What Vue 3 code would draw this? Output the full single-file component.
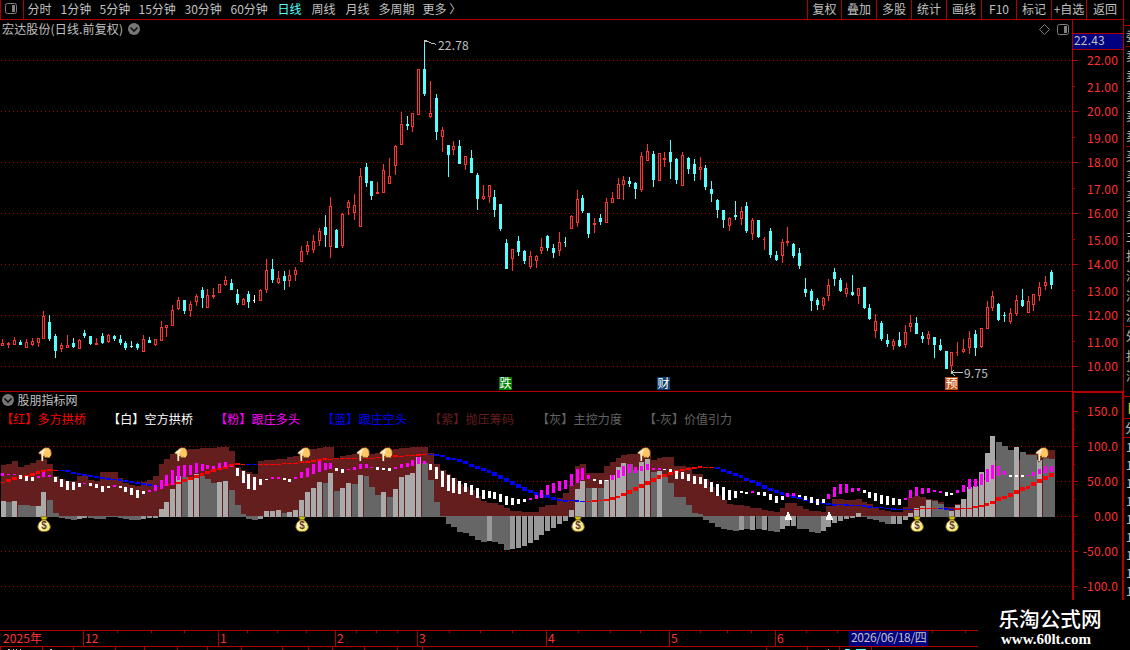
<template>
  <div class="app">
    <div class="left">
      <header class="toolbar">
        <span class="panel-btn">
          <svg width="13" height="12"><rect x="0.5" y="0.5" width="11" height="10" rx="2" class="ico" /><rect x="7" y="2" width="3" height="7" fill="#808080" /></svg>
        </span>
        <nav class="periods">
          <span v-for="p in periods" :key="p[0]" :class="{ active: p[0] === '日线' }" :style="{ width: p[1] + 'px' }">{{ p[0] }}</span>
        </nav>
        <nav class="tools">
          <span v-for="t in tools" :key="t">{{ t }}</span>
        </nav>
      </header>

      <svg class="price" width="1123" height="371" viewBox="0 20 1123 371" shape-rendering="crispEdges">
        <line v-for="y in priceGrid" :key="y" x1="1" x2="1072" :y1="y + 0.5" :y2="y + 0.5" class="grid" />
        <g v-for="c in candleList" :key="c.x" :fill="c.color">
          <rect :x="c.x" :y="c.high" width="1" :height="c.low - c.high" />
          <rect :x="c.x - 1" :y="c.top" :width="c.thin ? 2 : 3" :height="c.bottom - c.top" />
          <rect v-if="c.hollow" :x="c.x" :y="c.top + 1" width="1" :height="c.bottom - c.top - 2" fill="#000" />
        </g>
        <path d="M424.5 44V40.500H427M425 41.500H428L431 43H433L436 44.500" class="arrow" />
        <text x="438" y="50" class="mark">22.78</text>
        <path d="M963 372.500H951M951 372.500L954 370M951 372.500L955 376" class="arrow" />
        <text x="964" y="378" class="mark">9.75</text>
        <g v-for="e in events" :key="e.t">
          <rect :x="e.x" y="377" width="13" height="13" :fill="e.bg" />
          <text :x="e.x + 0.5" y="388" class="event">{{ e.t }}</text>
        </g>
        <text x="2" y="34" class="title" textLength="121">宏达股份(日线.前复权)</text>
        <g shape-rendering="auto">
          <circle cx="134" cy="29" r="6" fill="#777" />
          <path d="M130.500 27.500L134 31L137.500 27.500" class="chev" />
          <path d="M1039.500 29.500L1044.500 24.500L1049.500 29.500L1044.500 34.500Z" class="ico" />
          <rect x="1057.500" y="24.500" width="11" height="10" rx="2" class="ico" />
          <rect x="1064" y="26" width="3" height="7" fill="#808080" />
        </g>
        <path d="M1072.500 20V391M1073 33.500H1123M1073 49.500H1123" class="frame" />
        <rect x="1073" y="34" width="50" height="15" fill="#000080" />
        <text x="1074" y="45" class="mark">22.43</text>
        <g v-for="(l, i) in priceLabels" :key="l[0]">
          <rect x="1073" :y="i % 2 ? l[1] - 1 : l[1]" :width="i % 2 ? 2 : 5" height="1" fill="#b00000" />
          <text x="1118" :y="l[1] + 5" class="axis">{{ l[0] }}</text>
        </g>
      </svg>

      <svg class="sub" width="1123" height="239" viewBox="0 391 1123 239" shape-rendering="crispEdges">
        <path d="M0 391.500H1123" class="frame" />
        <line v-for="y in subGrid" :key="y" x1="1" x2="1072" :y1="y + 0.5" :y2="y + 0.5" class="grid" />
        <rect v-for="b in bars" :key="'b' + b.x" :x="b.left" :y="b.brown" :width="b.w" :height="517 - b.brown" fill="#641e1e" />
        <rect v-for="b in bars" :key="'g' + b.x" :x="b.left" :y="b.gy" :width="b.light ? Math.min(5, b.w) : b.w" :height="b.gh" :fill="b.fill" />
        <rect v-for="b in bars" :key="'l' + b.x" :x="b.left" :y="b.ly" :width="b.w - 1" :height="b.lh" :fill="b.lineColor" />
        <rect v-for="b in bars" :key="'s' + b.x" :x="b.x - 1" :y="b.st" width="3" :height="b.sh" :fill="b.stick" />

        <path v-for="x in [788, 829]" :key="'t' + x" :d="`M${x - 0.5} 512H${x + 0.5}L${x + 4.5} 520H${x - 3.5}Z`" fill="#fff" />
        <g shape-rendering="auto">
          <g v-for="x in hands" :key="'h' + x" :transform="`translate(${x - 6} 446)`">
            <path d="M1.500 7L6.500 2.300Q9 .8 12 1.800Q15 4 14.500 9L12.500 12L8 11.800L6.800 10L6.500 14.500L4.500 15.800L4 8.500L2 8Z" fill="#ffc864" stroke="#4c2410" stroke-width=".8" />
            <path d="M2.500 6.800L7 4L5.300 8.500V15" fill="none" stroke="#fff0d8" stroke-width="1.500" />
            <path d="M7.500 9.500V11.500M10 10.500V12" stroke="#a05a20" stroke-width=".8" />
          </g>
          <g v-for="x in bags" :key="'m' + x" :transform="`translate(${x - 6} 516)`">
            <path d="M3.500 .8H10.500L9 4H5Z" fill="#d8c800" stroke="#4a3800" stroke-width=".5" />
            <path d="M5 4Q0.500 7 .7 11Q1.500 15.700 7 15.700Q12.800 15.700 13.500 11Q13.200 7 9 4Z" fill="#f6ec70" stroke="#6a4a20" stroke-width=".8" />
            <ellipse cx="6" cy="9.500" rx="4" ry="4.300" fill="#fffbe0" />
            <text x="7" y="13.300" class="dollar">$</text>
          </g>
          <circle cx="8" cy="400" r="6" fill="#777" />
          <path d="M4.500 398.500L8 402L11.500 398.500" class="chev" />
        </g>

        <text x="17.500" y="405" class="title" textLength="60">股朋指标网</text>
        <text v-for="l in legend" :key="l.x" :x="l.x" y="424" :fill="l.color" :textLength="l.w">{{ l.t }}</text>

        <path d="M1073 393V600M1123 393V600" class="frame thick" />
        <path d="M1072 392.500H1123" class="frame" />
        <g v-for="l in subLabels" :key="l[0]">
          <rect x="1074" :y="l[1]" width="4" height="1" fill="#b00000" />
          <rect x="1074" :y="l[1] + 18" width="1" height="1" fill="#b00000" />
          <text x="1118" :y="l[1] + 5" class="axis">{{ l[0] }}</text>
        </g>
      </svg>

      <svg class="time" width="1123" height="20" viewBox="0 630 1123 20" shape-rendering="crispEdges">
        <path d="M0 630.500H978M0 646.500H978" class="frame" />
        <text x="3" y="643" class="date" textLength="39">2025年</text>
        <g v-for="m in months" :key="m[1]">
          <rect :x="m[1]" y="631" width="1" height="15" fill="#b00000" />
          <text :x="m[1] + 2" y="643" class="date">{{ m[0] }}</text>
        </g>
        <rect v-for="x in ticks" :key="x" :x="x" y="631" width="1" height="2" fill="#b00000" />
        <rect v-for="x in lowTicks" :key="'u' + x" :x="x" y="647" width="1" height="3" fill="#b00000" />
        <path d="M8 649.500H10M13 649.500H14M16 649.500H17M20 649.500H21M50 649.500H52M828 649.500H829" class="arrow" />
        <path d="M845 649.500H850M856 649.500H866" stroke="#54ffff" />
        <rect x="849" y="631" width="79" height="15" fill="#000080" />
        <text x="851" y="642" class="mark" textLength="76">2026/06/18/四</text>
      </svg>
    </div>

    <aside class="strip">
      <div class="quotes">
        <span v-for="(s, i) in strip" :key="i">{{ s }}</span>
      </div>
      <div class="tab">目</div>
      <div class="row">分</div>
      <div class="deals">
        <span v-for="n in 9" :key="n">1</span>
      </div>
    </aside>

    <div class="brand">
      <b>乐淘公式网</b>
      <i>www.60lt.com</i>
    </div>
  </div>
</template>

<script setup>
const periods = [['分时', 33], ['1分钟', 39], ['5分钟', 39], ['15分钟', 46], ['30分钟', 46], ['60分钟', 47], ['日线', 34], ['周线', 34], ['月线', 33], ['多周期', 44], ['更多 〉', 40]]
const tools = ['复权', '叠加', '多股', '统计', '画线', 'F10', '标记', '+自选', '返回']

const priceGrid = [60, 111, 162, 213, 264, 315, 366]
const subGrid = [446, 481, 516, 551, 586]
const priceLabels = [['22.00', 60], ['21.00', 87], ['20.00', 111], ['19.00', 138], ['18.00', 162], ['17.00', 189], ['16.00', 213], ['15.00', 240], ['14.00', 264], ['13.00', 291], ['12.00', 315], ['11.00', 342], ['10.00', 366]]
const subLabels = [['150.0', 411], ['100.0', 446], ['50.00', 481], ['0.00', 516], ['-50.00', 551], ['-100.0', 586]]
const events = [{ t: '跌', x: 499, bg: '#008000' }, { t: '财', x: 657, bg: '#104070' }, { t: '预', x: 945, bg: '#c05010' }]
const legend = [
  { t: '【红】多方拱桥', x: 1, w: 85, color: '#f00' },
  { t: '【白】空方拱桥', x: 108, w: 85, color: '#fff' },
  { t: '【粉】跟庄多头', x: 215, w: 85, color: '#f0f' },
  { t: '【蓝】跟庄空头', x: 322, w: 85, color: '#00f' },
  { t: '【紫】抛压筹码', x: 429, w: 85, color: '#641e1e' },
  { t: '【灰】主控力度', x: 537, w: 85, color: '#646464' },
  { t: '【-灰】价值引力', x: 644, w: 88, color: '#646464' }
]
const hands = [43, 179, 302, 361, 384, 642, 1040]
const bags = [43, 301, 577, 916, 951]
const months = [['12', 83], ['1', 218], ['2', 335], ['3', 417], ['4', 546], ['5', 669], ['6', 775]]
const ticks = [117, 151, 184, 247, 277, 306, 356, 376, 397, 449, 480, 512, 578, 610, 640, 700, 727, 751, 806, 837, 932, 965]
const lowTicks = [0, 42, 73, 115, 144, 177, 207, 241, 282, 308, 332, 364, 397, 422, 766, 807, 839, 871]
const strip = '委卖卖卖卖卖买买买买主扣消消沪外扣消'.split('')

// r/c/w, high, body top, body bottom, low
const candles = `r339,343,346,346 r342,343,345,348 r337,340,345,345 c340,342,345,345 r339,342,348,348 r338,341,345,346 r338,338,343,347 r311,316,339,339 c315,322,339,341 c334,336,351,358
r343,345,349,352 r335,345,348,348 c338,343,347,348 r339,340,349,349 c330,333,336,338 c336,336,344,345 r338,343,345,345 c333,336,343,344 r334,335,342,343 c335,336,339,341
c335,339,343,345 c341,343,348,350 c341,346,347,348 c343,344,348,350 r335,339,352,352 c337,340,343,343 r339,339,345,346 r321,327,341,341 r325,325,328,337 r305,310,326,326
r297,300,309,310 c300,300,311,314 r301,304,311,317 r294,296,302,306 c287,290,298,308 r289,295,308,308 r288,295,297,299 r284,284,293,293 r276,280,285,286 c279,283,290,290
c289,294,303,305 r298,299,305,305 c291,294,302,308 w295,300,301,303 r289,290,301,301 r259,270,290,293 c259,269,280,283 r271,278,283,284 c271,276,281,290 r270,275,281,287
r267,270,275,281 r246,251,262,262 r241,245,252,255 r235,241,250,253 r228,231,241,246 c215,227,235,247 r197,206,247,258 c229,230,248,248 r213,214,246,248 r200,202,208,215
r194,205,213,220 r168,176,227,227 c163,167,183,187 c181,181,196,200 r182,192,194,194 r164,170,193,193 r158,176,184,184 r145,146,166,175 r112,124,145,145 c116,124,126,130
r113,113,127,132 r69,69,115,115 c40,69,94,96 r81,113,117,118 c94,98,132,140 r127,130,137,152 c145,145,155,177 r141,146,150,155 c140,146,164,164 r156,156,165,170
c150,158,173,173 c173,175,199,210 r185,196,199,200 r185,185,197,203 c190,197,210,217 c204,204,229,231 c239,243,269,269 r249,249,259,271 c236,241,252,256 c250,251,261,264
r251,256,267,269 r255,256,261,268 r238,247,251,254 c235,236,248,251 c244,248,253,258 r232,242,251,256 c237,242,243,247 r215,216,229,229 r190,199,223,227 c195,198,211,213
c213,213,234,238 r218,223,225,233 c214,218,222,225 r198,202,223,223 r192,198,203,203 r178,184,199,199 r176,180,185,200 c177,181,184,187 c182,183,189,199 r152,156,190,192
r144,151,161,161 c151,154,180,187 r153,153,181,181 r152,158,160,167 c140,152,162,179 c158,159,180,184 r152,155,186,186 c157,158,169,174 c159,164,174,181 r157,167,170,180
c165,168,187,190 c181,189,194,202 c199,200,210,218 c210,210,220,228 r217,218,226,231 c201,215,217,220 r207,211,219,225 c202,206,231,233 r218,220,234,240 c220,220,237,238
r237,239,240,250 c228,231,255,258 c251,255,260,261 r239,242,256,263 r227,241,243,246 c243,244,256,258 c248,253,266,269 c278,289,293,297 c289,291,301,311 c298,300,305,310
r297,298,306,310 r279,285,296,301 c268,272,279,286 c278,280,291,292 r283,288,294,297 c275,292,295,296 r288,288,296,304 c287,287,308,309 c304,308,319,320 r314,321,331,338
c321,323,339,341 c334,340,344,347 r339,341,346,350 c332,340,346,347 r325,332,345,348 r315,323,327,332 c317,323,334,334 c332,336,339,343 r331,334,339,345 c337,337,345,358
c339,345,350,351 c351,351,369,369 r352,352,366,373 r342,352,353,356 r339,349,352,353 r331,338,348,354 c330,334,348,356 r328,328,347,348 r301,307,329,329 r291,296,308,311
c303,304,320,321 c312,315,316,322 r308,313,322,324 r295,300,314,316 c289,300,306,307 r296,301,313,313 r294,294,305,311 r282,287,296,301 r276,282,286,290 c270,272,285,289`.split(/\s+/)

// top edge of the brown area
const brown = [
  465, 464, 461, 467, 465, 463, 460, 459, 464, 476, 479, 481, 481, 476, 476, 480, 481, 472, 472, 472,
  478, 483, 485, 486, 482, 480, 476, 464, 459, 454, 451, 450, 449, 449, 448, 448, 448, 447, 447, 451,
  467, 470, 472, 474, 461, 460, 460, 459, 459, 457, 456, 453, 449, 449, 448, 447, 447, 459, 456, 455,
  454, 452, 452, 454, 453, 450, 450, 449, 448, 448, 447, 447, 447, 453, 464, 470, 474, 478, 484, 487,
  490, 496, 501, 503, 503, 505, 508, 511, 511, 512, 512, 512, 507, 505, 505, 498, 493, 485, 466, 464,
  473, 473, 473, 466, 462, 458, 455, 454, 454, 454, 451, 460, 458, 457, 457, 466, 466, 467, 474, 474,
  479, 487, 495, 500, 504, 505, 505, 506, 508, 508, 510, 511, 512, 508, 503, 503, 506, 509, 511, 511,
  512, 506, 499, 499, 500, 500, 499, 502, 504, 508, 510, 511, 512, 512, 507, 497, 496, 497, 499, 500,
  502, 507, 507, 504, 499, 488, 487, 480, 463, 460, 460, 460, 460, 460, 460, 454, 454, 450, 450, 450
]

// far edge of the gray bars, L is a light one
const gray = `501L 502 501L 505 505 506 506L 492L 500 513 518 519 520 519L 518L 518 519 519 517 517
518 519 520 520 519L 518L 518L 509L 502L 489L 476L 477 479L 474L 476 479 483 482L 481L 490
505 514 519 520 519L 511L 511L 510L 513 512L 510L 500L 492L 488L 482L 483 473L 491 488L 483L
484 475L 476 487 495 492L 497 489L 477L 475L 473L 457L 463 480 502 517 524 527 532 533
536 540 542 541L 542 544 550 549L 548L 546L 543L 540L 535L 531L 528L 524L 521L 510L 489L 481L
488 488L 488 480L 475L 467L 463L 464 470 462L 459L 472 471L 477 483 497 497 505 513 514
520 523 527 529 530 531 530L 529 530L 529 530L 531 532 529L 526L 526L 529 529 532 533
531L 527L 523L 521L 519L 518L 513L 517 519 520 522 524 524L 524L 520L 513L 508L 506L 500L 501
504 510 511L 505L 499L 487L 486L 472L 453L 436L 442 446 450 447L 452 455 455 460L 458 459`.split(/\s+/)

// center of the cost line, in thirds of a pixel below 390
const line = [
  277, 271, 265, 261, 257, 252, 247, 243, 240, 240, 241, 244, 248, 251, 254, 258, 261, 264, 266, 267,
  269, 273, 276, 279, 282, 285, 288, 288, 285, 282, 278, 272, 265, 259, 253, 247, 241, 237, 231, 226,
  223, 223, 223, 223, 223, 222, 222, 222, 221, 220, 219, 217, 215, 213, 210, 208, 207, 206, 206, 206,
  205, 205, 204, 204, 203, 202, 201, 199, 198, 197, 196, 194, 193, 193, 196, 198, 204, 207, 212, 218,
  225, 231, 238, 245, 253, 262, 270, 279, 288, 296, 303, 310, 315, 320, 325, 329, 332, 332, 334, 334,
  334, 332, 331, 329, 324, 320, 313, 305, 297, 288, 279, 270, 262, 257, 251, 245, 241, 237, 234, 232,
  232, 232, 234, 240, 246, 253, 260, 267, 274, 282, 290, 297, 304, 311, 315, 320, 324, 329, 334, 337,
  340, 342, 344, 344, 346, 347, 347, 349, 351, 352, 353, 354, 356, 357, 358, 358, 357, 356, 355, 355,
  355, 358, 358, 356, 355, 354, 351, 348, 343, 336, 328, 323, 314, 306, 298, 291, 282, 273, 264, 256
]
const blueRuns = [[10, 27], [42, 43], [73, 99], [122, 155], [160, 162]]

// pink / white sticks, same units as the line
const sticks = `p249-258 p252-255 p252-255 w255-267 w258-273 w261-273 p258-264 p246-261 p255-261 w261-276 w267-291 w273-300 w276-300 w279-291 p279-282 w279-288 w282-294 w288-306 w288-294 p285-291
w288-294 w291-306 w294-315 w300-324 w303-312 p300-306 p285-303 p270-297 p255-288 p240-285 p228-270 p225-261 p225-255 p219-249 p222-243 p225-237 p228-237 p219-234 p216-231 p228-231
w234-258 w243-279 w252-297 w261-300 w267-285 w267-270 p261-267 p261-267 w264-270 w267-276 p261-267 p246-264 p234-261 p222-252 p213-246 p219-240 p219-237 w234-243 w237-249 p237-240
p231-240 p222-237 p222-234 p231-234 w231-240 w234-240 w234-243 p231-237 p222-234 p219-231 p210-228 p201-222 p213-222 w222-240 w231-267 w243-291 w255-303 w264-309 w273-312 w279-306
w285-315 w294-324 w300-327 w303-324 w306-327 w312-336 w318-345 w324-345 w327-342 w327-336 p324-330 p315-327 p300-324 p285-315 p279-309 p273-303 p270-297 p252-288 p237-279 p234-270
p255-267 w267-273 w270-282 w270-273 p255-270 p240-264 p228-258 p222-249 p231-249 p228-243 p222-240 p234-240 p234-240 w237-240 w237-246 w243-267 w246-267 w252-273 w258-282 w261-282
w267-294 w276-306 w282-318 w291-330 w300-330 w303-324 w303-309 w306-312 p303-309 w306-315 w306-318 w312-330 w318-339 w318-330 p309-321 p309-318 w315-321 w318-330 w321-339 w327-345
w327-339 p312-327 p291-321 p282-312 p282-309 p294-306 p294-303 w300-309 w306-324 w309-333 w315-342 w318-345 w324-345 w327-345 p324-330 p300-324 p291-318 p294-312 p294-309 p300-306
p303-309 w306-318 w309-315 p300-309 p285-306 p267-297 p267-291 p252-285 p237-276 p225-267 p228-258 p243-255 w255-261 w255-261 w255-261 p255-258 p246-258 p237-252 p228-249 p228-246`.split(/\s+/)

const xAt = i => Math.ceil(1.88 + i * 5.8585)
const colors = { r: '#ff3232', c: '#54ffff', w: '#fff', p: '#f0f' }

const candleList = candles.map((s, i) => {
  const [high, top, bottom, low] = s.slice(1).split(',').map(Number)
  return { x: xAt(i), high, top, bottom, low, color: colors[s[0]], hollow: s[0] === 'r' && bottom - top > 2, thin: bottom - top === 1 && i !== 22 && i !== 171 }
})

const bars = gray.map((s, i) => {
  const x = xAt(i)
  const left = Math.max(1, x - 2)
  const end = parseInt(s)
  const light = s.endsWith('L')
  const down = end > 516
  const [a, b] = sticks[i].slice(1).split('-').map(Number)
  const lh = Math.min(4, Math.round(Math.abs(line[i] - line[Math.max(0, i - 1)]) / 3) + 1)
  return {
    x,
    left,
    w: xAt(i + 1) - 2 - left,
    brown: brown[i],
    light,
    gy: down ? 516 : end,
    gh: down ? end - 516 : 517 - end,
    fill: light ? (down ? '#989898' : '#aaa') : '#666',
    ly: Math.round(390 + line[i] / 3 - lh / 2),
    lh,
    lineColor: blueRuns.some(r => i >= r[0] && i <= r[1]) ? '#00f' : '#f00',
    st: 390 + a / 3,
    sh: (b - a) / 3,
    stick: colors[sticks[i][0]]
  }
})
</script>

<style>
body {
  background: #000;
  overflow: hidden;
}
</style>

<style scoped>
.app {
  position: relative;
  display: flex;
  width: 1130px;
  height: 650px;
  background: #000;
  color: #c0c0c0;
  font: 12px "Noto Sans CJK SC", sans-serif;
  overflow: hidden;
}

.left {
  width: 1123px;
  display: flex;
  flex-direction: column;
}

.left > svg {
  display: block;
  flex: none;
  overflow: visible;
}

.toolbar {
  height: 19px;
  display: flex;
  border-bottom: 1px solid #b00000;
  line-height: 18px;
  white-space: nowrap;
}

.panel-btn {
  box-sizing: border-box;
  width: 24px;
  padding: 3px 0 0 4px;
  border-left: 1px solid #b00000;
  border-right: 1px solid #b00000;
}

.panel-btn svg {
  display: block;
}

.periods {
  display: flex;
  padding-left: 3.5px;
}

.periods .active {
  color: #54ffff;
}

.tools {
  display: flex;
  margin-left: auto;
}

.tools span {
  box-sizing: border-box;
  width: 35px;
  border-left: 1px solid #b00000;
  text-align: center;
}

.tools span:first-child {
  width: 34px;
}

.tools span:last-child {
  width: 37px;
}

text {
  font-size: 12px;
}

.grid {
  stroke: #b00000;
  stroke-dasharray: 1 3;
}

.frame {
  fill: none;
  stroke: #b00000;
}

.thick {
  stroke-width: 2;
}

.ico {
  fill: none;
  stroke: #808080;
}

.arrow {
  fill: none;
  stroke: #c0c0c0;
}

.chev {
  fill: none;
  stroke: #111;
  stroke-width: 1.6;
}

.mark,
.title {
  fill: #c0c0c0;
}

.mark {
  letter-spacing: 0.2px;
}

.event {
  fill: #fff;
}

.axis {
  fill: #ff3232;
  text-anchor: end;
  letter-spacing: 0.2px;
}

.date {
  fill: #ff3232;
}

.dollar {
  font: bold 10px "Liberation Sans", sans-serif;
  fill: #6a3c10;
  text-anchor: middle;
}

.strip {
  box-sizing: border-box;
  width: 7px;
  flex: none;
  border-left: 1px solid #b00000;
  overflow: hidden;
}

.strip span {
  display: block;
}

.quotes {
  box-sizing: border-box;
  height: 372px;
  margin-top: 25px;
  padding-left: 2px;
  border-top: 1px solid #b00000;
  border-bottom: 1px solid #b00000;
}

.quotes span {
  width: 12px;
  height: 20px;
  line-height: 20px;
}

.quotes span:nth-child(1),
.quotes span:nth-child(6),
.quotes span:nth-child(15) {
  box-shadow: 0 1px #b00000;
}

.tab {
  height: 21px;
  padding-left: 3px;
  color: #e0e000;
  line-height: 21px;
  border-bottom: 1px solid #b00000;
}

.row {
  height: 18px;
  padding-left: 1px;
  line-height: 18px;
  border-bottom: 1px solid #b00000;
}

.deals {
  padding-left: 2px;
}

.deals span {
  height: 18px;
  line-height: 18px;
}

.brand {
  position: absolute;
  left: 978px;
  top: 600px;
  width: 152px;
  height: 50px;
  display: flex;
  flex-direction: column;
  align-items: center;
  background: #000;
  color: #fff;
}

.brand b {
  margin-top: 5px;
  margin-right: 8px;
  font-size: 20.6px;
  font-weight: 500;
  line-height: 27px;
}

.brand i {
  margin-right: 16px;
  font: bold 15px/14px "Liberation Serif", serif;
}
</style>
